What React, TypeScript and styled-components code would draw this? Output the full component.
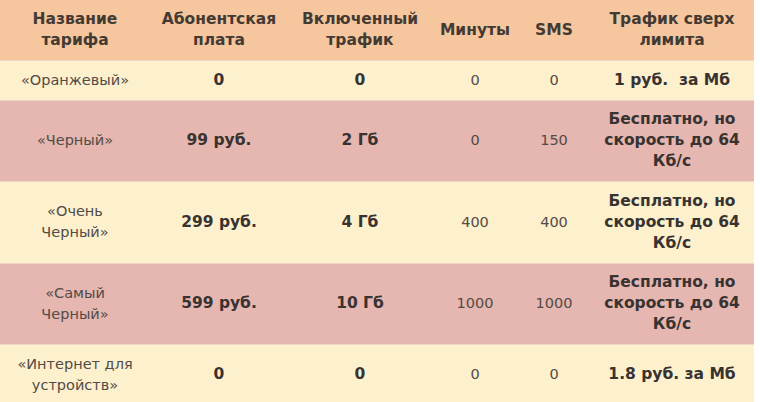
import React from "react";
import styled, { createGlobalStyle } from "styled-components";

const GlobalStyle = createGlobalStyle`
  html, body {
    margin: 0;
    padding: 0;
    background: #ffffff;
  }
  body {
    font-family: "DejaVu Sans", Verdana, sans-serif;
  }
`;

const Table = styled.table`
  width: 754px;
  border-collapse: collapse;
  table-layout: fixed;
  font-size: 14.5px;
  line-height: 21px;
  color: #3b3b3b;
`;

const Head = styled.th`
  background: #f6c69f;
  font-weight: bold;
  font-size: 15.5px;
  text-align: center;
  padding: 9px 4px;
  color: #433a33;
`;

const Row = styled.tr<{ $tone: "cream" | "pink" }>`
  background: ${(p) => (p.$tone === "pink" ? "#e6b6b1" : "#fdf0cd")};
  border-top: 1px solid ${(p) => (p.$tone === "pink" ? "#f2d3c4" : "#efd6c6")};
`;

const Cell = styled.td<{ $bold?: boolean }>`
  text-align: center;
  padding: 8.5px 4px 9px;
  font-weight: ${(p) => (p.$bold ? "bold" : "normal")};
  font-size: ${(p) => (p.$bold ? "15.5px" : "14.5px")};
  color: ${(p) => (p.$bold ? "#383330" : "#524b46")};
`;

const columns = [
  { title: ["Название", "тарифа"], width: 150 },
  { title: ["Абонентская", "плата"], width: 138 },
  { title: ["Включенный", "трафик"], width: 144 },
  { title: ["Минуты"], width: 86 },
  { title: ["SMS"], width: 72 },
  { title: ["Трафик сверх", "лимита"], width: 164 },
];

const rows = [
  { name: ["«Оранжевый»"], fee: "0", traffic: "0", min: "0", sms: "0", over: ["1 руб.\u00a0 за Мб"] },
  { name: ["«Черный»"], fee: "99 руб.", traffic: "2 Гб", min: "0", sms: "150", over: ["Бесплатно, но", "скорость до 64", "Кб/с"] },
  { name: ["«Очень", "Черный»"], fee: "299 руб.", traffic: "4 Гб", min: "400", sms: "400", over: ["Бесплатно, но", "скорость до 64", "Кб/с"] },
  { name: ["«Самый", "Черный»"], fee: "599 руб.", traffic: "10 Гб", min: "1000", sms: "1000", over: ["Бесплатно, но", "скорость до 64", "Кб/с"] },
  { name: ["«Интернет для", "устройств»"], fee: "0", traffic: "0", min: "0", sms: "0", over: ["1.8 руб. за Мб"] },
];

function Lines({ parts }: { parts: string[] }) {
  return (
    <>
      {parts.map((p, i) => (
        <React.Fragment key={i}>
          {i > 0 && <br />}
          {p}
        </React.Fragment>
      ))}
    </>
  );
}

export default function App() {
  return (
    <>
      <GlobalStyle />
      <Table>
        <colgroup>
          {columns.map((c, i) => (
            <col key={i} style={{ width: c.width }} />
          ))}
        </colgroup>
        <thead>
          <tr>
            {columns.map((c, i) => (
              <Head key={i}>
                <Lines parts={c.title} />
              </Head>
            ))}
          </tr>
        </thead>
        <tbody>
          {rows.map((r, i) => (
            <Row key={i} $tone={i % 2 === 1 ? "pink" : "cream"}>
              <Cell>
                <Lines parts={r.name} />
              </Cell>
              <Cell $bold>{r.fee}</Cell>
              <Cell $bold>{r.traffic}</Cell>
              <Cell>{r.min}</Cell>
              <Cell>{r.sms}</Cell>
              <Cell $bold>
                <Lines parts={r.over} />
              </Cell>
            </Row>
          ))}
        </tbody>
      </Table>
    </>
  );
}
